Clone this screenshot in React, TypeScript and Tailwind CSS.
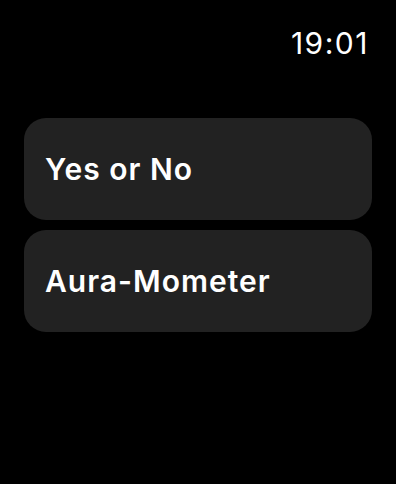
const items = ["Yes or No", "Aura-Mometer"];

export default function App() {
  return (
    <div
      className="w-[396px] h-[484px] bg-black text-white overflow-hidden"
      style={{ fontFamily: "Inter, 'Noto Sans', sans-serif" }}
    >
      <div className="flex justify-end pt-[26px] pr-[27px]">
        <span className="text-[30px] leading-[34px] font-normal tracking-[1.5px]">19:01</span>
      </div>
      <div className="flex flex-col gap-[10px] px-[24px] mt-[58px]">
        {items.map((label) => (
          <div
            key={label}
            className="h-[102px] rounded-[22px] bg-[#222222] flex items-center pl-[21px]"
          >
            <span className="text-[30px] font-semibold leading-none tracking-[1px]">{label}</span>
          </div>
        ))}
      </div>
    </div>
  );
}
